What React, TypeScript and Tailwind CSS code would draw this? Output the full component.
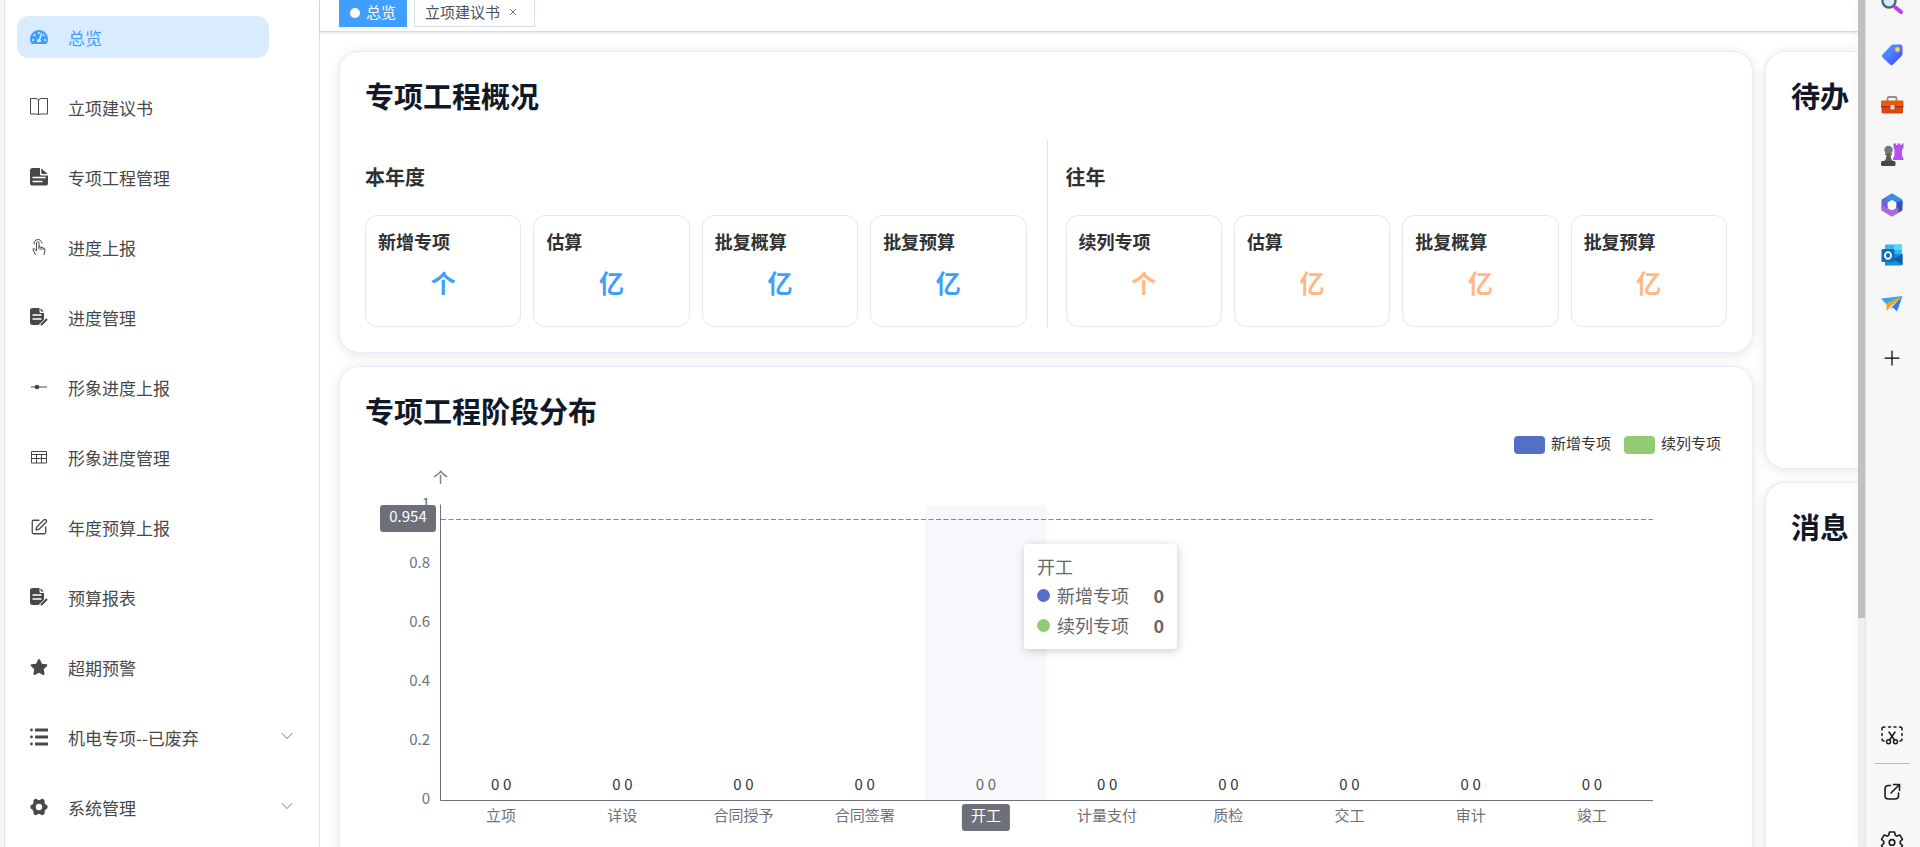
import { ReactNode } from 'react';
import { FaTachometerAlt, FaStar } from 'react-icons/fa';
import { ChevronDown, Plus, SquarePen, X } from 'lucide-react';

const BookIcon = () => (
  <svg viewBox="0 0 18 18" className="size-[18px]" fill="none" stroke="currentColor" strokeWidth="1">
    <path d="M.5 .5h5.500q2.500 0 2.500 2.500q0-2.500 2.500-2.500h6.500v15.500h-6.500q-2.500 0-2.500 1q0-1-2.500-1h-5.500zM8.500 3v14" />
  </svg>
);

const DocIcon = () => (
  <svg viewBox="0 0 18 18" className="size-[18px]" fill="currentColor">
    <path d="M2.500 0H10v6q0 1.500 1.500 1.500H18V15.500q0 2-2 2H2q-2 0-2-2V2.500Q0 0 2.500 0zM11.300 .3L17.700 6h-5.200q-1.200 0-1.200-1.200z" />
    <path d="M2.500 9.500h13M2.500 13.500h10" stroke="#fff" strokeWidth="1.500" />
  </svg>
);

const DocEditIcon = () => (
  <svg viewBox="0 0 18 18" className="size-[18px]" fill="currentColor">
    <path d="M2.500 0H9.500v3.500q0 1.500 1.500 1.500H14v6.500L8.500 17H2.500Q0 17 0 14.500V2.500Q0 0 2.500 0zM10.600 .3L13.800 3.600h-2.200q-1 0-1-1z" />
    <path d="M2.500 7h9M2.500 11h9" stroke="#fff" strokeWidth="1.500" />
    <path d="M11 17L17 11" stroke="currentColor" strokeWidth="2.200" />
  </svg>
);

const TouchIcon = () => (
  <svg viewBox="0 0 18 18" className="size-[18px]" fill="none" stroke="currentColor" strokeWidth="1" strokeLinecap="round" strokeLinejoin="round">
    <path d="M4 6A4 4 0 1 1 12 5" />
    <path d="M5.500 16.500L3 11.800q-.3-1.300 1.200-1.300L6.500 13V4.500q1.300-1.800 2.500 0V9q1.500-1 2 .5q1.500-.7 2 .5q2 0 2 2l-1 4.500M9 9v2M11 9.500v2M13 10v1.500" />
  </svg>
);

const NodeIcon = () => (
  <svg viewBox="0 0 18 18" className="size-[18px]" fill="currentColor">
    <path d="M1 8.500h16v1H1z" />
    <circle cx="7" cy="9" r="2.300" />
  </svg>
);

const GridIcon = () => (
  <svg viewBox="0 0 18 18" className="size-[18px]" fill="none" stroke="currentColor" strokeWidth="1">
    <path d="M1.500 3.500h15v11.500h-15zM1.500 6.500h15M1.500 10.500h15M6.500 6.500v8.500M11.500 6.500v8.500" />
  </svg>
);

const ListIcon = () => (
  <svg viewBox="0 0 18 18" className="size-[18px]" fill="currentColor">
    <path d="M5 .5h13v3H5zM5 7.500h13v3H5zM5 14.500h13v3H5z" />
    <circle cx="1.500" cy="2" r="1.400" />
    <circle cx="1.500" cy="9" r="1.400" />
    <circle cx="1.500" cy="16" r="1.400" />
  </svg>
);

const CogIcon = () => (
  <svg viewBox="0 0 18 18" className="size-[18px]">
    <path d="M2.700 9h12.600M5.700 3.300l6.600 11.400M12.300 3.300L5.700 14.700" stroke="currentColor" strokeWidth="4.800" strokeLinecap="round" />
    <circle cx="9" cy="9" r="7" fill="currentColor" />
    <circle cx="9" cy="9" r="3.200" fill="#fff" />
  </svg>
);

interface MenuItem {
  label: string;
  icon: ReactNode;
  active?: boolean;
  expandable?: boolean;
}

const menu: MenuItem[] = [
  { label: '总览', icon: <FaTachometerAlt className="size-[18px]" />, active: true },
  { label: '立项建议书', icon: <BookIcon /> },
  { label: '专项工程管理', icon: <DocIcon /> },
  { label: '进度上报', icon: <TouchIcon /> },
  { label: '进度管理', icon: <DocEditIcon /> },
  { label: '形象进度上报', icon: <NodeIcon /> },
  { label: '形象进度管理', icon: <GridIcon /> },
  { label: '年度预算上报', icon: <SquarePen className="size-[18px]" strokeWidth={1.75} /> },
  { label: '预算报表', icon: <DocEditIcon /> },
  { label: '超期预警', icon: <FaStar className="size-[18px]" /> },
  { label: '机电专项--已废弃', icon: <ListIcon />, expandable: true },
  { label: '系统管理', icon: <CogIcon />, expandable: true },
];

function Sidebar() {
  return (
    <nav className="w-[315px] shrink-0 border-r border-[#dcdfe6] pl-[12px] pt-4">
      <ul className="flex flex-col gap-7">
        {menu.map((item) => (
          <li key={item.label} className="flex h-[42px] items-center">
            <a
              href="#"
              className={`flex h-full w-[252px] items-center gap-5 rounded-xl pl-[13px] text-[17px] ${
                item.active ? 'bg-[#d9ebff] text-[#409eff]' : 'text-[#484848]'
              }`}
            >
              {item.icon}
              <span className="pt-0.5">{item.label}</span>
            </a>
            {item.expandable && (
              <button aria-label={`展开${item.label}`} className="ml-2 pb-0.5 text-[#909399]">
                <ChevronDown className="size-5" strokeWidth={1.25} />
              </button>
            )}
          </li>
        ))}
      </ul>
    </nav>
  );
}

function Tabs() {
  return (
    <div className="flex h-8 items-start gap-[7px] border-b border-[#d8dce5] pl-[19px] text-[15px] shadow-[0_1px_3px_rgba(0,0,0,0.12)]">
      <a href="#" className="flex h-[27px] items-center gap-1.5 bg-[#409eff] px-[11px] pb-0.5 text-white">
        <span className="size-2.5 rounded-full bg-white" />
        总览
      </a>
      <div className="flex h-[27px] items-center gap-2 border border-t-0 border-[#d8dce5] pl-2.5 pr-4 pb-0.5 text-[#495060]">
        <a href="#">立项建议书</a>
        <button aria-label="关闭">
          <X className="size-2.5" strokeWidth={2} />
        </button>
      </div>
    </div>
  );
}

interface StatGroupProps {
  title: string;
  stats: { name: string; unit: string }[];
  color: string;
}

function StatGroup({ title, stats, color }: StatGroupProps) {
  return (
    <>
      <h3 className="text-xl/7 font-bold text-[#303133]">{title}</h3>
      <div className="mt-6 grid grid-cols-4 gap-3">
        {stats.map((s) => (
          <div key={s.name} className="h-28 rounded-xl border border-[#e8e8e8] px-3 pt-[13px]">
            <p className="text-[18px]/6 font-bold text-[#303133]">{s.name}</p>
            <p className={`mt-[13px] text-center text-[25px]/8 font-bold ${color}`}>{s.unit}</p>
          </div>
        ))}
      </div>
    </>
  );
}

const thisYear = [
  { name: '新增专项', unit: '个' },
  { name: '估算', unit: '亿' },
  { name: '批复概算', unit: '亿' },
  { name: '批复预算', unit: '亿' },
];
const pastYears = [{ name: '续列专项', unit: '个' }, ...thisYear.slice(1)];

const stages = ['立项', '详设', '合同授予', '合同签署', '开工', '计量支付', '质检', '交工', '审计', '竣工'];
const ticks = ['0', '0.2', '0.4', '0.6', '0.8', '1'];
const series = [
  { name: '新增专项', color: '#5470c6', x: 1149, dot: 'bg-[#5470c6]' },
  { name: '续列专项', color: '#91cc75', x: 1259, dot: 'bg-[#91cc75]' },
];
const X0 = 75.5;
const Y0 = 369.5;
const BAND = 121.2;
const ACTIVE = 4;

function StageChart() {
  return (
    <div className="relative">
      <svg viewBox="0 0 1362 430" className="w-full text-[15px]" fill="#6e7079">
        {series.map((s) => (
          <g key={s.name}>
            <rect x={s.x} y="5" width="31" height="18" rx="4" fill={s.color} />
            <text x={s.x + 37} y="18" fill="#333">{s.name}</text>
          </g>
        ))}
        <text x={X0} y="52" textAnchor="middle">个</text>
        {ticks.map((t, i) => (
          <text key={t} x="65" y={Y0 + 3 - i * 59} textAnchor="end">{t}</text>
        ))}
        <rect x={X0 + BAND * ACTIVE} y="74" width={BAND} height="295" fill="#f6f8fc" />
        <path d="M75.500 73.500V369.500H1288" fill="none" stroke="#6e7079" />
        <path d="M76 88.500H1288" stroke="#888" strokeDasharray="5 2.5" />
        {stages.map((name, i) => {
          const cx = X0 + BAND * (i + 0.5);
          const on = i === ACTIVE;
          return (
            <g key={name} textAnchor="middle">
              <text x={cx - 6} y="359" fill={on ? '#666' : '#333'}>0</text>
              <text x={cx + 6} y="359" fill={on ? '#666' : '#333'}>0</text>
              {on && <rect x={cx - 24} y="373" width="48" height="27" rx="3" />}
              <text x={cx} y="390" fill={on ? '#fff' : '#6e7079'}>{name}</text>
            </g>
          );
        })}
        <rect x="15" y="74" width="56" height="27" rx="3" />
        <text x="43" y="91" textAnchor="middle" fill="#fff">0.954</text>
      </svg>

      {/* Tooltip */}
      <div className="absolute left-[659px] top-[113px] w-[153px] rounded bg-white px-[13px] pt-2 pb-[9px] text-[18px]/[30px] text-[#666] shadow-[1px_2px_10px_rgba(0,0,0,0.2)]">
        <p className="h-[28px] text-[18px]/[28px]">开工</p>
        {series.map((s) => (
          <p key={s.name} className="flex items-center">
            <span className={`mr-[7px] size-[13px] rounded-full ${s.dot}`} />
            {s.name}
            <b className="ml-auto">0</b>
          </p>
        ))}
      </div>
    </div>
  );
}

const card = 'border border-[#e6ebf5] bg-white px-[25px] pt-[22px] pb-[25px] shadow-[0_2px_12px_rgba(0,0,0,0.1)]';
const cardTitle = 'text-[29px]/[42px] font-bold text-[#111827]';

const SearchIcon = () => (
  <svg viewBox="0 0 24 24" className="size-6">
    <path d="M15.500 14.500L21 19" stroke="#c239e8" strokeWidth="4" strokeLinecap="round" />
    <circle cx="9" cy="8" r="6.500" fill="#cdeefb" stroke="#5b6066" strokeWidth="2.400" />
  </svg>
);

const TagIcon = () => (
  <svg viewBox="0 0 24 24" className="size-6">
    <defs>
      <linearGradient id="tag" x1="0" y1="0" x2="1" y2="1">
        <stop offset="0" stopColor="#5aa7ff" />
        <stop offset="1" stopColor="#3b46ff" />
      </linearGradient>
    </defs>
    <path d="M13 1.500h7q2.500 0 2.500 2.500v7q0 1-1 2l-8.500 8.500q-1.500 1.500-3 0l-7.500-7q-1.500-1.500 0-3L11 2.500q1-1 2-1z" fill="url(#tag)" />
    <circle cx="17.500" cy="6.500" r="2" fill="#fff0a0" stroke="#f5b915" strokeWidth="1.300" />
  </svg>
);

const ToolboxIcon = () => (
  <svg viewBox="0 0 24 24" className="size-6">
    <path d="M7.500 8V5.500q0-1.500 1.500-1.500h6q1.500 0 1.500 1.500V8" fill="none" stroke="#8b8f94" strokeWidth="1.800" />
    <rect x="1.500" y="8" width="21.500" height="12.500" rx="1.500" fill="#d9480f" />
    <path d="M1 8.500q0-1 1-1h20.500q1 0 1 1V13H1z" fill="#e8590c" />
    <path d="M1 13h22.500v1.500H1z" fill="#a83208" />
    <rect x="10.500" y="12" width="4" height="4.500" rx="1" fill="#d8dde2" />
  </svg>
);

const ChessIcon = () => (
  <svg viewBox="0 0 24 24" className="size-6">
    <path d="M13.500 .500h2.500v1.500h1.500V.500h2.500v1.500h1.500V.500H23.500V5l-1.500 1.500v6l1.500 3V17H13v-1.500l1.500-3v-6L13.500 5z" fill="#b84df5" />
    <circle cx="8.500" cy="7" r="4.200" fill="#777" />
    <path d="M5 10.500h7v1.500h-1.500q0 4 2.500 6H4q2.500-2 2.500-6H5z" fill="#5c5c5c" />
    <rect x="1" y="18" width="14.500" height="5" rx="1.500" fill="#484848" />
  </svg>
);

const OfficeIcon = () => (
  <svg viewBox="0 0 24 24" className="size-6">
    <path d="M12 .500L2.500 6q-1 .6-1 1.800v8.400q0 1 .8 1.600L8 15V9.500z" fill="#6f63d2" />
    <path d="M11 .800q1-.6 2 0L21.500 6q1 .6 1 1.800v5L16 9.500 12 7.500 6.500 10.500V5z" fill="#3f8be0" />
    <path d="M22.500 7.800v8.400q0 1.200-1 1.800L16 21V9.500z" fill="#3a4fb0" />
    <path d="M18.500 19.700L13 23.200q-1 .6-2 0L2.500 18q-1-.6-1-1.800V12l6.500 3.500 4 1.700 6-3z" fill="#a96ad6" />
    <path d="M12 7.500l3.900 2.250v4.500L12 16.500l-3.900-2.250v-4.500z" fill="#f7f7f7" stroke="#f7f7f7" strokeLinejoin="round" />
  </svg>
);

const OutlookIcon = () => (
  <svg viewBox="0 0 24 24" className="size-6">
    <path d="M6 1.500h15q1 0 1 1V12H5V2.500q0-1 1-1z" fill="#35b8f1" />
    <path d="M14 1.500h8V7h-8z" fill="#50d9ff" />
    <path d="M5 11h17.500v10q0 1.500-1.500 1.500H5z" fill="#1490df" />
    <path d="M22.500 11v11L13 16z" fill="#0f5fa8" />
    <rect x="1.500" y="6" width="13" height="13" rx="1.500" fill="#0f6cbd" />
    <ellipse cx="8" cy="12.500" rx="3" ry="3.400" fill="none" stroke="#fff" strokeWidth="1.900" />
  </svg>
);

const PlaneIcon = () => (
  <svg viewBox="0 0 24 24" className="size-6">
    <path d="M1 5.500L22.500 3l-9 8-7 .5z" fill="#34a7ea" />
    <path d="M22.500 3L17 18.500l-4-4-3 1.500z" fill="#2f7cf0" />
    <path d="M22.500 3L6.500 10.500V18l3.500-4z" fill="#f4a51c" />
  </svg>
);

const SnipIcon = () => (
  <svg viewBox="0 0 24 24" className="size-6" fill="none" stroke="#1b1b1b" strokeWidth="1.500" strokeLinecap="round">
    <path d="M2 7V6q0-2 2-2h1M8.500 4h2M14 4h2M19.500 4h.500q2 0 2 2v1M22 10.500v2M22 16q0 2-2 2M2 10.500v2M2 16q0 2 2 2" />
    <path d="M9 9l5.500 8M15 9l-5.500 8" />
    <circle cx="8.500" cy="18.800" r="2" />
    <circle cx="15.500" cy="18.800" r="2" />
  </svg>
);

const OpenIcon = () => (
  <svg viewBox="0 0 24 24" className="size-6" fill="none" stroke="#1b1b1b" strokeWidth="1.600" strokeLinecap="round" strokeLinejoin="round">
    <path d="M10.500 5.500H8.500q-3.500 0-3.500 3.500v6.500q0 3.500 3.500 3.500H15q3.500 0 3.500-3.500V13M13.500 4.500h6v6M19 5l-8 8" />
  </svg>
);

const SettingsIcon = () => (
  <svg viewBox="0 0 24 24" className="size-6" fill="none" stroke="#1b1b1b" strokeWidth="1.600" strokeLinejoin="round">
    <path d="M9.500 2h5l.8 3.200 1.500.9 3.200-1 2.500 4.200-2.400 2.200v1.800l2.400 2.200-2.500 4.200-3.200-1-1.500.9-.8 3.200h-5l-.8-3.200-1.500-.9-3.200 1-2.500-4.200 2.400-2.200v-1.800L1.500 9.300 4 5.100l3.200 1 1.500-.9z" />
    <circle cx="12" cy="12.400" r="2.800" />
  </svg>
);

const apps = [
  { name: '搜索', icon: <SearchIcon /> },
  { name: '购物', icon: <TagIcon /> },
  { name: '工具', icon: <ToolboxIcon /> },
  { name: '游戏', icon: <ChessIcon /> },
  { name: 'Microsoft 365', icon: <OfficeIcon /> },
  { name: 'Outlook', icon: <OutlookIcon /> },
  { name: 'Drop', icon: <PlaneIcon /> },
];

function AppBar() {
  return (
    <aside className="flex w-[55px] shrink-0 flex-col items-center border-l border-[#e4e4e4] bg-[#f7f7f7] pr-0.5 shadow-[0_0_16px_rgba(0,0,0,0.12)]">
      <div className="-mt-[7px] flex flex-col gap-[26px]">
        {apps.map((a) => (
          <button key={a.name} aria-label={a.name}>{a.icon}</button>
        ))}
        <button aria-label="添加" className="mt-[3px]">
          <Plus className="size-6" strokeWidth={1.25} />
        </button>
      </div>
      <div className="mt-auto -mb-[7px] flex flex-col items-center">
        <button aria-label="截图"><SnipIcon /></button>
        <hr className="mt-4 mb-4 w-[35px] border-[#b8b8b8]" />
        <button aria-label="打开"><OpenIcon /></button>
        <button aria-label="设置" className="mt-[26px]"><SettingsIcon /></button>
      </div>
    </aside>
  );
}

export default function App() {
  return (
    <div className="flex h-screen overflow-hidden bg-white font-['Noto_Sans_CJK_SC',sans-serif]">
      <div className="w-[5px] shrink-0 border-r border-[#e0e0e0] bg-[#f5f5f5]" />
      <Sidebar />

      <main className="min-w-0 flex-1">
        <Tabs />
        <div className="flex gap-3 pl-[19px] pt-[19px]">
          <div className="flex min-w-0 flex-1 flex-col gap-[13px]">
            <section className={`rounded-[20px] ${card}`}>
              <h2 className={cardTitle}>专项工程概况</h2>
              <div className="mt-6 flex">
                <div className="flex-1 border-r border-[#e4e4e4] pr-5 pt-[23px]">
                  <StatGroup title="本年度" stats={thisYear} color="text-[#409eff]" />
                </div>
                <div className="flex-1 pl-[18px] pt-[23px]">
                  <StatGroup title="往年" stats={pastYears} color="text-[#ffb886]" />
                </div>
              </div>
            </section>
            <section className={`rounded-[20px] ${card}`}>
              <h2 className={cardTitle}>专项工程阶段分布</h2>
              <StageChart />
            </section>
          </div>

          <div className="flex w-[93px] shrink-0 flex-col gap-[13px] whitespace-nowrap">
            <section className={`h-[418px] rounded-l-[20px] border-r-0 ${card}`}>
              <h2 className={cardTitle}>待办</h2>
            </section>
            <section className={`h-[418px] rounded-l-[20px] border-r-0 ${card}`}>
              <h2 className={cardTitle}>消息</h2>
            </section>
          </div>
        </div>
      </main>

      {/* Scrollbar */}
      <div className="relative z-10 w-[7px] shrink-0 bg-[#efefef]">
        <div className="h-[73%] bg-[#c0c0c0]" />
      </div>
      <AppBar />
    </div>
  );
}
